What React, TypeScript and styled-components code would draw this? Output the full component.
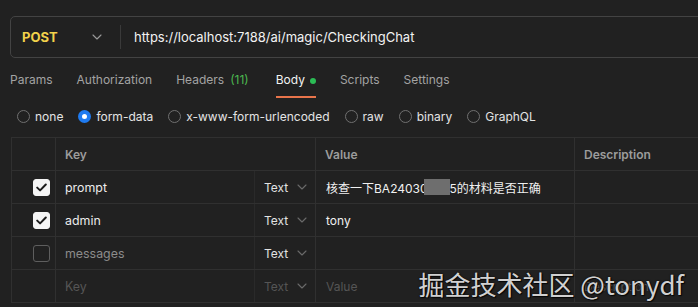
import styled, { createGlobalStyle } from "styled-components"

const Global = createGlobalStyle`
  body {
    margin: 0;
    background: #212121;
    font-family: Inter, "Noto Sans", "Noto Sans CJK SC", sans-serif;
    color: #e8e8e8;
    overflow: hidden;
  }
`

const tabs = ["Params", "Authorization", "Headers", "Body", "Scripts", "Settings"]
const modes = ["none", "form-data", "x-www-form-urlencoded", "raw", "binary", "GraphQL"]

type Row = { key: string; value?: string; on: boolean; muted?: boolean; blank?: boolean }
const rows: Row[] = [
  { key: "prompt", value: "prompt", on: true },
  { key: "admin", value: "tony", on: true },
  { key: "messages", on: false, muted: true },
  { key: "Key", on: false, blank: true },
]

const Chevron = ({ color = "#8a8a8a" }: { color?: string }) => (
  <svg width="10" height="6" viewBox="0 0 10 6" fill="none">
    <path d="M1 1l4 4 4-4" stroke={color} strokeWidth="1.1" strokeLinecap="round" strokeLinejoin="round" />
  </svg>
)

const App = () => {
  return (
    <Page>
      <Global />
      <UrlBar>
        <Method>
          POST
          <Chevron color="#9a9a9a" />
        </Method>
        <Url>https://localhost:7188/ai/magic/CheckingChat</Url>
      </UrlBar>

      <Tabs>
        {tabs.map((t) => (
          <Tab key={t} active={t === "Body"}>
            {t}
            {t === "Headers" && <Count>(11)</Count>}
            {t === "Body" && <Dot />}
          </Tab>
        ))}
      </Tabs>

      <Modes>
        {modes.map((m) => (
          <Mode key={m}>
            <Radio checked={m === "form-data"} />
            {m}
          </Mode>
        ))}
      </Modes>

      <Table>
        <HeadRow>
          <Cell />
          <HeadCell>Key</HeadCell>
          <HeadCell>Value</HeadCell>
          <HeadCell>Description</HeadCell>
        </HeadRow>
        {rows.map((r) => (
          <BodyRow key={r.key}>
            <Cell center>{!r.blank && <Check on={r.on}>{r.on && <CheckMark />}</Check>}</Cell>
            <KeyCell>
              <KeyText tone={r.blank ? "ghost" : r.muted ? "muted" : "normal"}>{r.key}</KeyText>
            </KeyCell>
            <TypeCell>
              <TypeText faint={r.blank}>Text</TypeText>
              <Chevron color="#6a6a6a" />
            </TypeCell>
            <ValueCell>
              {r.key === "prompt" ? (
                <ValueText>
                  核查一下BA24030<Redact />5的材料是否正确
                </ValueText>
              ) : r.blank ? (
                <ValueText ghost>Value</ValueText>
              ) : (
                <ValueText>{r.value}</ValueText>
              )}
            </ValueCell>
            <DescCell>{r.blank && <ValueText ghost>Description</ValueText>}</DescCell>
          </BodyRow>
        ))}
      </Table>

      <Watermark>掘金技术社区 @tonydf</Watermark>
    </Page>
  )
}

const CheckMark = () => (
  <svg width="11" height="9" viewBox="0 0 11 9" fill="none">
    <path d="M1.2 4.6l2.9 2.8L9.8 1.5" stroke="#1c1c1c" strokeWidth="2" strokeLinecap="round" strokeLinejoin="round" />
  </svg>
)

export default App

const Page = styled.div`
  position: relative;
  width: 698px;
  height: 307px;
  padding-top: 16px;
  box-sizing: border-box;
`

const UrlBar = styled.div`
  margin-left: 10px;
  width: 720px;
  height: 42px;
  box-sizing: border-box;
  border: 1px solid #434343;
  border-radius: 5px;
  display: flex;
  align-items: center;
`

const Method = styled.div`
  width: 110px;
  box-sizing: border-box;
  padding: 0 18px 0 11px;
  display: flex;
  align-items: center;
  justify-content: space-between;
  border-right: 1px solid #3a3a3a;
  height: 24px;
  font-size: 13px;
  font-weight: 700;
  color: #f2d14b;
`

const Url = styled.div`
  padding-left: 13px;
  font-size: 13px;
  color: #f2f2f2;
`

const Tabs = styled.div`
  display: flex;
  gap: 24px;
  padding-left: 10px;
  margin-top: 13px;
  height: 27px;
`

const Tab = styled.div<{ active?: boolean }>`
  position: relative;
  font-size: 12px;
  line-height: 18px;
  color: ${(p) => (p.active ? "#f2f2f2" : "#a3a3a3")};
  display: flex;
  align-items: flex-start;
  border-bottom: 2px solid ${(p) => (p.active ? "#e8744b" : "transparent")};
  height: 25px;
`

const Count = styled.span`
  color: #4cb84f;
  margin-left: 6px;
  margin-right: 3px;
`

const Dot = styled.span`
  width: 6px;
  height: 6px;
  border-radius: 50%;
  background: #2bbc55;
  margin: 7px 0 0 5px;
`

const Modes = styled.div`
  display: flex;
  gap: 15px;
  padding-left: 17px;
  margin-top: 4px;
  height: 28px;
  align-items: center;
`

const Mode = styled.div`
  display: flex;
  align-items: center;
  gap: 5px;
  font-size: 12px;
  color: #e4e4e4;
`

const Radio = styled.span<{ checked?: boolean }>`
  width: 13px;
  height: 13px;
  box-sizing: border-box;
  border-radius: 50%;
  border: ${(p) => (p.checked ? "4px solid #1f7bf0" : "1px solid #707070")};
  background: ${(p) => (p.checked ? "#ffffff" : "transparent")};
`

const Table = styled.div`
  margin: 7px 0 0 11px;
  width: 720px;
  border-top: 1px solid #303030;
  border-left: 1px solid #303030;
`

const HeadRow = styled.div`
  display: grid;
  grid-template-columns: 44px 260px 259px 1fr;
  height: 33px;
  box-sizing: border-box;
  border-bottom: 1px solid #303030;
`

const BodyRow = styled.div`
  display: grid;
  grid-template-columns: 44px 199px 61px 259px 1fr;
  height: 33px;
  box-sizing: border-box;
  border-bottom: 1px solid #303030;
`

const Cell = styled.div<{ center?: boolean }>`
  display: flex;
  align-items: center;
  justify-content: ${(p) => (p.center ? "flex-end" : "flex-start")};
  padding-right: ${(p) => (p.center ? "5px" : "0")};
  border-right: 1px solid #303030;
`

const HeadCell = styled.div`
  display: flex;
  align-items: center;
  padding-left: 9px;
  border-right: 1px solid #303030;
  font-size: 12px;
  font-weight: 600;
  color: #9c9c9c;
`

const Check = styled.span<{ on?: boolean }>`
  width: 17px;
  height: 17px;
  box-sizing: border-box;
  border-radius: 3px;
  display: flex;
  align-items: center;
  justify-content: center;
  background: ${(p) => (p.on ? "#f5f5f5" : "transparent")};
  border: 1px solid ${(p) => (p.on ? "#f5f5f5" : "#5e5e5e")};
`

const KeyCell = styled.div`
  display: flex;
  align-items: center;
  padding-left: 9px;
  border-right: 1px solid #2a2a2a;
`

const KeyText = styled.span<{ tone: "normal" | "muted" | "ghost" }>`
  font-size: 12.4px;
  color: ${(p) => (p.tone === "normal" ? "#ececec" : p.tone === "muted" ? "#8c8c8c" : "#555555")};
`

const TypeCell = styled.div`
  display: flex;
  align-items: center;
  gap: 9px;
  padding-left: 9px;
  border-right: 1px solid #303030;
`

const TypeText = styled.span<{ faint?: boolean }>`
  font-size: 12px;
  color: ${(p) => (p.faint ? "#555555" : "#e2e2e2")};
`

const ValueCell = styled.div`
  display: flex;
  align-items: center;
  padding-left: 10px;
  border-right: 1px solid #303030;
`

const DescCell = styled.div`
  display: flex;
  align-items: center;
  padding-left: 9px;
`

const ValueText = styled.span<{ ghost?: boolean }>`
  font-size: 12px;
  color: ${(p) => (p.ghost ? "#555555" : "#f0f0f0")};
  display: flex;
  align-items: center;
  white-space: nowrap;
`

const Redact = styled.span`
  display: inline-block;
  width: 26px;
  height: 16px;
  margin-left: -4px;
  background: #6e6e6e;
`

const Watermark = styled.div`
  position: absolute;
  right: 14px;
  bottom: 5px;
  font-size: 26px;
  color: rgba(238, 238, 238, 0.9);
  text-shadow: 0 0 2px rgba(0, 0, 0, 0.9), 1px 1px 1px rgba(0, 0, 0, 0.8);
  font-family: "Noto Sans CJK SC", "Noto Sans", sans-serif;
`
